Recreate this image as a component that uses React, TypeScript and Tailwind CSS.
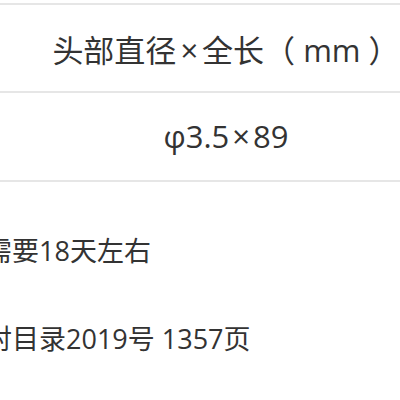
const font = {
  fontFamily: '"Open Sans", "Noto Sans CJK SC", sans-serif',
};

export default function App() {
  return (
    <div
      className="w-[400px] h-[400px] overflow-hidden bg-white text-[#333333]"
      style={font}
    >
      <div className="w-[452px] pt-[3px]">
        <div className="h-[88px] border-t-2 border-[#e6e6e6] flex items-center justify-center pt-1 text-[31px] whitespace-pre">
          头部直径<span className="mx-[4px]">×</span>全长（ mm ）
        </div>
        <div className="h-[91px] border-t-2 border-b-2 border-[#e6e6e6] flex items-center justify-center text-[31px] whitespace-nowrap">
          φ3.5<span className="mx-[3px]">×</span>89
        </div>
      </div>
      <div className="ml-[-15px] text-[27px] whitespace-nowrap">
        <p className="mt-[49px] leading-[40px]">需要18天左右</p>
        <p className="mt-[48px] leading-[40px]">对目录2019号 1357页</p>
      </div>
    </div>
  );
}
